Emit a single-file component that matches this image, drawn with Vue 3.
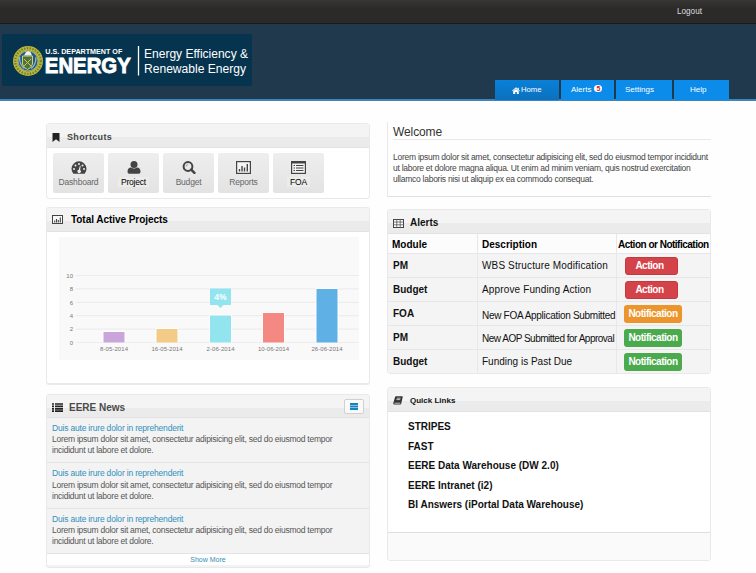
<script setup>
const tiles = [
  { name: 'Dashboard', icon: 'gauge', dark: false },
  { name: 'Project', icon: 'user', dark: true },
  { name: 'Budget', icon: 'search', dark: false },
  { name: 'Reports', icon: 'chart', dark: false },
  { name: 'FOA', icon: 'list', dark: true },
]
const bars = [
  { x: 44.5, h: 10.5, color: '#c9a5da', label: '8-05-2014' },
  { x: 97.5, h: 13.5, color: '#f4ca87', label: '16-05-2014' },
  { x: 151, h: 27, color: '#92e5ee', label: '2-06-2014' },
  { x: 204, h: 29.5, color: '#f48984', label: '10-06-2014' },
  { x: 257.5, h: 53.5, color: '#5fb0e5', label: '26-06-2014' },
]
const ticks = [10, 8, 6, 4, 2, 0]
const alerts = [
  { mod: 'PM', text: 'WBS Structure Modification', fit: 'wide', kind: 'red', act: 'Action' },
  { mod: 'Budget', text: 'Approve Funding Action', fit: 'wide', kind: 'red', act: 'Action' },
  { mod: 'FOA', text: 'New FOA Application Submitted', fit: 'snug', kind: 'orange', act: 'Notification' },
  { mod: 'PM', text: 'New AOP Submitted for Approval', fit: 'tight', kind: 'green', act: 'Notification' },
  { mod: 'Budget', text: 'Funding is Past Due', fit: '', kind: 'green', act: 'Notification' },
]
const links = ['STRIPES', 'FAST', 'EERE Data Warehouse (DW 2.0)', 'EERE Intranet (i2)', 'BI Answers (iPortal Data Warehouse)']
</script>

<template>
  <div class="page">
    <div class="topbar"><span>Logout</span></div>
    <header class="header">
      <svg class="logo" width="250" height="52" viewBox="0 0 250 52">
        <rect width="250" height="52" fill="#06344f" />
        <circle cx="26" cy="27" r="12.7" fill="#24503b" stroke="#b9b83a" stroke-width="4.6" />
        <circle cx="26" cy="27" r="12.8" fill="none" stroke="#6d7a31" stroke-width="2.2" stroke-dasharray="1.3 1.5" />
        <circle cx="26" cy="27" r="10" fill="#1d5a94" stroke="#e0d77a" stroke-width=".7" />
        <path d="M22 21.500l2-3.500 2-1 2.500 1 1.500 3.500z" fill="#e9f0ee" />
        <path d="M20.5 22h10v8q-1 4-5 5.500q-4-1.500-5-5.500z" fill="#4b7440" stroke="#d8cf6a" stroke-width="1" />
        <path d="M22 25l7 7M29 25l-7 7" stroke="#e0c24a" stroke-width="1" />
        <path d="M17.500 23q0 8 5 11.500M34 23q0 8-5 11.500" stroke="#9ab6b0" stroke-width="1.300" fill="none" />
        <g class="logo-text" fill="#fff">
          <text x="43.300" y="20" font-size="7" font-weight="bold" textLength="77" lengthAdjust="spacingAndGlyphs">U.S. DEPARTMENT OF</text>
          <text x="42.800" y="38.600" font-size="22" font-weight="bold" stroke="#fff" stroke-width=".9" textLength="86" lengthAdjust="spacingAndGlyphs">ENERGY</text>
          <text x="142" y="24.300" font-size="12" textLength="104" lengthAdjust="spacingAndGlyphs">Energy Efficiency &amp;</text>
          <text x="142" y="38.700" font-size="12" textLength="102" lengthAdjust="spacingAndGlyphs">Renewable Energy</text>
        </g>
        <path d="M136.500 12v29.500" stroke="#fff" stroke-width="1.300" />
      </svg>
      <nav class="tabs">
        <a class="tab home">
          <svg width="8" height="7" viewBox="0 0 8 7"><path d="M4 .2L0 3.800l.6.5L4 1.400l3.400 2.900.6-.5-1.200-1.100V.7H5.700v1zM1.200 4.300V7h2V5h1.600v2h2V4.300L4 2z" fill="#fff" /></svg>Home
        </a>
        <a class="tab alerts-tab">Alerts<b class="badge">5</b></a>
        <a class="tab settings">Settings</a>
        <a class="tab help">Help</a>
      </nav>
    </header>

    <main class="cols">
      <div class="col">
        <section class="panel shortcuts">
          <div class="head">
            <svg class="hico" width="8" height="9" viewBox="0 0 8 9"><path d="M.5 0h7v9L4 6.200.5 9z" fill="#222" /></svg>
            <h2 class="t-short">Shortcuts</h2>
          </div>
          <div class="tiles">
            <div v-for="t in tiles" :key="t.name" class="tile" :class="{ dark: t.dark }">
              <svg v-if="t.icon === 'gauge'" width="16" height="13" viewBox="0 0 16 13">
                <path d="M2.300 12.700A7.500 7.500 0 1 1 13.700 12.700z" fill="#444" />
                <g fill="#eee"><circle cx="3" cy="8" r="1" /><circle cx="4.500" cy="4.400" r="1" /><circle cx="8" cy="2.900" r="1" /><circle cx="11.500" cy="4.400" r="1" /><circle cx="13" cy="8" r="1" /><path d="M8.900 4.700l.8.200-.6 4a1.700 1.700 0 1 1-1.300-.2z" /></g>
              </svg>
              <svg v-else-if="t.icon === 'user'" width="14" height="13" viewBox="0 0 14 13">
                <circle cx="7" cy="3.600" r="3.500" fill="#444" /><path d="M.5 11q0-4.300 3.500-4.500Q7 8.600 10 6.500q3.500.2 3.500 4.500 0 1.800-1.700 1.800H2.200Q.5 12.800.5 11z" fill="#444" />
              </svg>
              <svg v-else-if="t.icon === 'search'" width="14" height="13" viewBox="0 0 14 13">
                <circle cx="6" cy="5.500" r="4.400" fill="none" stroke="#444" stroke-width="2" /><path d="M9.200 8.700l3.200 3.200" stroke="#444" stroke-width="2.500" stroke-linecap="round" /><path d="M4 5.500q.2-1.800 2-2" stroke="#777" fill="none" stroke-width=".7" />
              </svg>
              <svg v-else-if="t.icon === 'chart'" width="15" height="13" viewBox="0 0 15 13">
                <rect x=".6" y=".6" width="13.800" height="11.800" fill="#f5f5f5" stroke="#444" stroke-width="1.200" /><path d="M3.500 10.500V8M6 10.500V5M8.500 10.500V6.500M11.300 10.500V3" stroke="#444" stroke-width="1.400" />
              </svg>
              <svg v-else width="15" height="13" viewBox="0 0 15 13">
                <rect x=".6" y=".6" width="13.800" height="11.800" fill="#f5f5f5" stroke="#444" stroke-width="1.200" /><path d="M0 1.500h15" stroke="#444" stroke-width="2" /><path d="M2.500 4.500h1.500M2.500 7h1.500M2.500 9.500h1.500M5 4.500h7.500M5 7h7.500M5 9.500h7.500" stroke="#444" stroke-width="1.200" />
              </svg>
              <span>{{ t.name }}</span>
            </div>
          </div>
        </section>

        <section class="panel projects">
          <div class="head">
            <svg class="hico" width="11" height="9" viewBox="0 0 11 9"><rect x=".5" y=".5" width="10" height="8" fill="#f8f8f8" stroke="#444" /><path d="M2.700 7.500V5.500M4.500 7.500V4M6.300 7.500V5M8.300 7.500V2.500" stroke="#444" stroke-width="1.100" /></svg>
            <h2 class="t-total">Total Active Projects</h2>
          </div>
          <svg class="chart" width="300" height="123" viewBox="0 0 300 123">
            <rect width="300" height="123" fill="#f9f9f9" />
            <g v-for="(n, i) in ticks" :key="n">
              <path :d="`M17 ${38.500 + i * 13.400}H300`" stroke="#ededed" stroke-width="1.200" />
              <text x="14" :y="40.700 + i * 13.400" text-anchor="end">{{ n }}</text>
            </g>
            <g v-for="b in bars" :key="b.label">
              <rect :x="b.x - .8" :y="104.700 - b.h" width="22.600" :height="b.h + .8" fill="#fff" />
              <rect :x="b.x" :y="105.500 - b.h" width="21" :height="b.h" :fill="b.color" />
              <text :x="b.x + 10.500" y="113.600" text-anchor="middle" :textLength="b.label.length * 3.120">{{ b.label }}</text>
            </g>
            <path d="M151 51.500h21V68h-7.500l-3 2.900-3-2.900h-7.500z" fill="#92e5ee" />
            <text class="pct" x="161.500" y="63" text-anchor="middle">4%</text>
          </svg>
        </section>

        <section class="panel news">
          <div class="head">
            <svg class="hico" width="11" height="9" viewBox="0 0 11 9"><path d="M0 1h2M0 3.400h2M0 5.800h2M0 8.200h2M3 1h8M3 3.400h8M3 5.800h8M3 8.200h8" stroke="#222" stroke-width="1.700" /></svg>
            <h2 class="t-news">EERE News</h2>
            <span class="menu"><svg width="8" height="7" viewBox="0 0 8 7"><path d="M0 1h8M0 3.500h8M0 6h8" stroke="#1682c0" stroke-width="1.900" /></svg></span>
          </div>
          <article v-for="n in 3" :key="n" class="item">
            <a>Duis aute irure dolor in reprehenderit</a>
            <p>Lorem ipsum dolor sit amet, consectetur adipisicing elit, sed do eiusmod tempor<br>incididunt ut labore et dolore.</p>
          </article>
          <div class="more">Show More</div>
        </section>
      </div>

      <div class="col right">
        <section class="welcome">
          <h1>Welcome</h1>
          <p>Lorem ipsum dolor sit amet, consectetur adipisicing elit, sed do eiusmod tempor incididunt<br>ut labore et dolore magna aliqua. Ut enim ad minim veniam, quis nostrud exercitation<br>ullamco laboris nisi ut aliquip ex ea commodo consequat.</p>
        </section>

        <section class="panel alerts">
          <div class="head">
            <svg class="hico" width="11" height="9" viewBox="0 0 11 9"><rect x=".5" y=".5" width="10" height="8" fill="#fff" stroke="#444" /><path d="M0 3h11M0 5.800h11M3.800 0v9M7.200 0v9" stroke="#555" stroke-width=".8" /></svg>
            <h2>Alerts</h2>
          </div>
          <div class="row thead"><b>Module</b><b>Description</b><b class="c3">Action or Notification</b></div>
          <div v-for="(a, i) in alerts" :key="i" class="row">
            <b>{{ a.mod }}</b>
            <span :class="a.fit">{{ a.text }}</span>
            <span class="cell"><i class="btn" :class="a.kind">{{ a.act }}</i></span>
          </div>
        </section>

        <section class="panel quick">
          <div class="head">
            <svg class="hico" width="10" height="9" viewBox="0 0 10 9"><path d="M3 .3h6.200q.7 0 .5.700L8.200 7.700q-.2.800-1 .8H1Q0 8.300.3 7L2 1.200Q2.300.3 3 .3z" fill="#333" /><path d="M3.800 2.200h3.800M3.400 3.600h3.800M1.400 7.200h5.900" stroke="#e5e5e5" stroke-width=".8" /></svg>
            <h2 class="t-quick">Quick Links</h2>
          </div>
          <ul><li v-for="l in links" :key="l">{{ l }}</li></ul>
          <div class="foot"></div>
        </section>
      </div>
    </main>
  </div>
</template>

<style>
body { background: #fefefe; }
</style>

<style scoped>
.page { width: 756px; height: 573px; overflow: hidden; background: #fefefe; font-family: "Liberation Sans", Arial, sans-serif; font-size: 8px; color: #444; }
.page * { box-sizing: border-box; }
h1, h2, p, ul { margin: 0; padding: 0; }
.topbar { height: 24px; background: linear-gradient(#383634, #2b2a29 40%, #2b2a29); border-bottom: 1px solid #141c22; padding: 7px 54px 0 0; text-align: right; line-height: 10px; color: #ddd; font-size: 8.2px; }
.header { height: 77px; background: #20394d; border-bottom: 2px solid #3d86bd; display: flex; justify-content: space-between; align-items: flex-end; padding: 0 27px 0 2px; }
.logo { align-self: flex-start; margin-top: 10px; display: block; }
.logo-text { font-family: "Liberation Sans", Arial, sans-serif; }
.tabs { display: flex; gap: 2px; margin-bottom: -1px; }
.tab { height: 20px; background: #0b8bea; color: #fff; line-height: 20px; display: flex; align-items: center; white-space: nowrap; }
.home { width: 64px; padding-left: 17px; gap: 1px; background: linear-gradient(#0a80d8, #0b71bd); font-size: 7.7px; }
.alerts-tab { width: 53px; padding-left: 10px; gap: 3px; }
.settings { width: 56px; padding-left: 9px; }
.help { width: 55px; padding-left: 16px; }
.badge { width: 8px; height: 7px; border-radius: 4px; background: #fff; color: #d22; font-size: 7px; line-height: 7px; text-align: center; margin-top: -3px; }
.cols { display: flex; gap: 17px; padding: 22px 45px 0 46px; }
.col { width: 324px; display: flex; flex-direction: column; }
.panel { border: 1px solid #e9e9e9; border-radius: 3px; background: #fff; overflow: hidden; }
.head { height: 23px; flex: none; display: flex; align-items: center; background: linear-gradient(#f4f4f4 0 58%, #ebebeb 58%); border-bottom: 1px solid #e2e2e2; padding-left: 5px; }
.hico { flex: none; }
h2 { font-size: 10px; line-height: 12px; color: #111; font-weight: bold; white-space: nowrap; margin-left: 6px; }
.shortcuts { height: 76px; margin-bottom: 8px; }
.shortcuts .head { padding-top: 3px; height: 24px; }
.t-short { font-size: 9px; color: #444; letter-spacing: .35px; margin-left: 7px; }
.tiles { display: flex; gap: 4px; padding: 5px 0 0 6px; }
.tile { width: 51px; height: 40px; border-radius: 2px; background: linear-gradient(#eee, #e3e3e3); display: flex; flex-direction: column; align-items: center; padding-top: 8px; color: #666; }
.tile span { font-size: 8.5px; letter-spacing: -.2px; line-height: 10px; margin-top: 3px; }
.tile.dark span { color: #000; background: #ececea; padding: 0 3px; }
.projects { height: 178px; margin-bottom: 9px; border-bottom-width: 2px; }
.projects .head { height: 24px; }
.t-total { letter-spacing: -.05px; margin-left: 8px; color: #000; }
.chart { display: block; margin: 5px 0 0 12px; font-family: "Liberation Sans", Arial, sans-serif; font-size: 6px; fill: #777; }
.chart .pct { font-size: 8.5px; font-weight: bold; fill: #fff; }
.news { height: 174px; background: #f3f3f3; }
.news .head { padding: 3px 5px 0 5px; }
.t-news { color: #4a4a4a; margin-left: 6px; }
.menu { margin-left: auto; width: 20px; height: 15px; margin-top: -2px; background: #fafafa; border: 1px solid #d0d0d0; border-radius: 2px; display: flex; align-items: center; justify-content: center; }
.item { height: 45.4px; border-bottom: 1px solid #e4e4e4; padding: 5px 0 0 5px; font-size: 8.5px; letter-spacing: -.25px; line-height: 11.200px; white-space: nowrap; color: #555; }
.item a { color: #3290bb; display: block; letter-spacing: -.19px; }
.more { height: 11px; background: #fff; text-align: center; line-height: 12px; color: #3290bb; font-size: 7px; }
.welcome { height: 75px; margin-top: -1px; margin-bottom: 12px; border-left: 1px solid #e8e8e8; border-bottom: 1px solid #e0e0e0; }
h1 { font-size: 12px; font-weight: normal; letter-spacing: -.1px; line-height: 14px; height: 18px; margin-left: 5px; padding-top: 3px; color: #333; border-bottom: 1px solid #e8e8e8; }
.welcome p { margin: 12px 0 0 5px; font-size: 8.5px; letter-spacing: -.26px; line-height: 11.200px; white-space: nowrap; color: #444; }
.alerts { height: 165px; border-width: 1px; }
.alerts .head { padding-top: 3px; height: 24px; }
.row { display: grid; grid-template-columns: 90px 139px 1fr; height: 24.100px; background: #f4f4f4; border-bottom: 1px solid #e6e6e6; font-size: 10px; line-height: 23px; color: #111; white-space: nowrap; }
.row > * { padding-left: 4px; border-right: 1px solid #e8e8e8; }
.row > :first-child { padding-left: 5px; }
.row > :last-child { border-right: 0; }
.thead { height: 20px; background: #fcfcfc; color: #000; line-height: 22px; }
.thead > :first-child { padding-left: 4px; }
.thead .c3 { letter-spacing: -.5px; padding-left: 1px; }
.wide { letter-spacing: .14px; }
.snug { letter-spacing: -.29px; padding-top: 2px; }
.tight { letter-spacing: -.5px; padding-top: 1px; }
.row .cell { padding: 3px 0 0 8px; display: flex; }
.btn { font-style: normal; font-weight: bold; color: #fff; height: 18px; line-height: 17px; width: 58px; border-radius: 3px; text-align: center; letter-spacing: -.48px; margin-left: -1px; }
.red { width: 53px; margin-left: 0; padding-right: 4px; background: #d5434a; border: 1px solid #c6383f; line-height: 16px; }
.orange { background: #ec952c; }
.green { background: #4ba94e; }
.quick { height: 174px; margin-top: 13px; }
.quick .head { padding-top: 2px; height: 24px; }
.t-quick { font-size: 8px; margin-left: 7px; }
ul { list-style: none; padding: 5px 0 0 20px; height: 120px; font-weight: bold; font-size: 10px; line-height: 19.500px; color: #111; }
.foot { border-top: 1px solid #dedede; background: #fafafa; height: 30px; }
</style>
